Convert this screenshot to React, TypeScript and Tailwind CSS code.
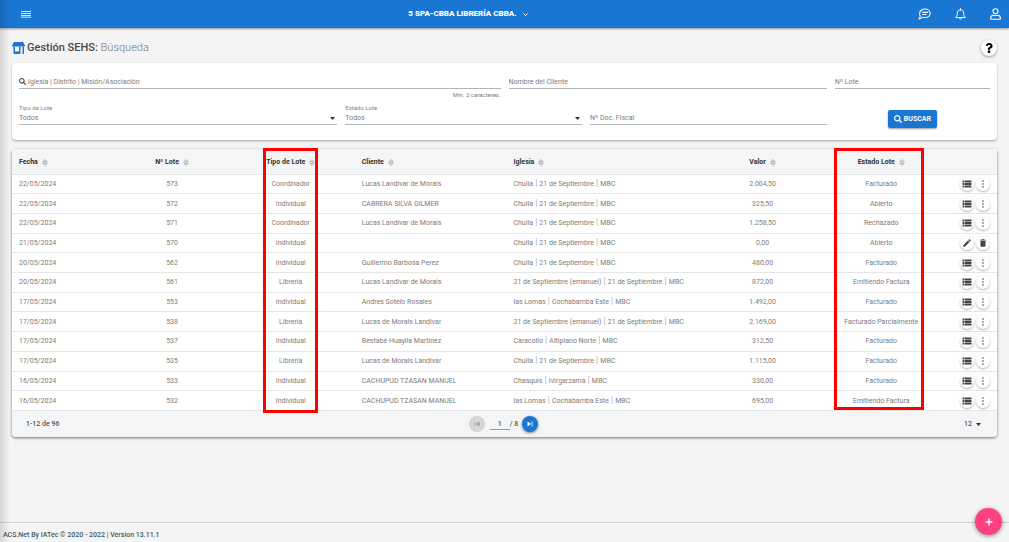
import { Fragment, useState } from 'react';
import { FaPlus, FaQuestion, FaSearch } from 'react-icons/fa';
import { MdDelete, MdEdit, MdSkipNext, MdSkipPrevious, MdViewList } from 'react-icons/md';

type Lote = {
  fecha: string;
  numero: string;
  tipo: string;
  cliente: string;
  iglesia: string[];
  valor: string;
  estado: string;
  editable?: boolean;
};

const CHULLA = ['Chulla', '21 de Septiembre', 'MBC'];
const EMANUEL = ['21 de Septiembre (emanuel)', '21 de Septiembre', 'MBC'];
const LOMAS = ['las Lomas', 'Cochabamba Este', 'MBC'];

const lotes: Lote[] = [
  { fecha: '22/05/2024', numero: '573', tipo: 'Coordinador', cliente: 'Lucas Landivar de Morais', iglesia: CHULLA, valor: '2.004,50', estado: 'Facturado' },
  { fecha: '22/05/2024', numero: '572', tipo: 'Individual', cliente: 'CABRERA SILVA GILMER', iglesia: CHULLA, valor: '325,50', estado: 'Abierto' },
  { fecha: '22/05/2024', numero: '571', tipo: 'Coordinador', cliente: 'Lucas Landivar de Morais', iglesia: CHULLA, valor: '1.258,50', estado: 'Rechazado' },
  { fecha: '21/05/2024', numero: '570', tipo: 'Individual', cliente: '', iglesia: CHULLA, valor: '0,00', estado: 'Abierto', editable: true },
  { fecha: '20/05/2024', numero: '562', tipo: 'Individual', cliente: 'Guillermo Barbosa Perez', iglesia: CHULLA, valor: '480,00', estado: 'Facturado' },
  { fecha: '20/05/2024', numero: '561', tipo: 'Librería', cliente: 'Lucas Landivar de Morais', iglesia: EMANUEL, valor: '872,00', estado: 'Emitiendo Factura' },
  { fecha: '17/05/2024', numero: '553', tipo: 'Individual', cliente: 'Andres Sotelo Rosales', iglesia: LOMAS, valor: '1.492,00', estado: 'Facturado' },
  { fecha: '17/05/2024', numero: '538', tipo: 'Librería', cliente: 'Lucas de Morais Landivar', iglesia: EMANUEL, valor: '2.169,00', estado: 'Facturado Parcialmente' },
  { fecha: '17/05/2024', numero: '537', tipo: 'Individual', cliente: 'Bestabé Huaylla Martinez', iglesia: ['Caracollo', 'Altiplano Norte', 'MBC'], valor: '312,50', estado: 'Facturado' },
  { fecha: '17/05/2024', numero: '535', tipo: 'Librería', cliente: 'Lucas de Morais Landivar', iglesia: CHULLA, valor: '1.115,00', estado: 'Facturado' },
  { fecha: '16/05/2024', numero: '533', tipo: 'Individual', cliente: 'CACHUPUD TZASAN MANUEL', iglesia: ['Chasquis', 'Ivirgarzama', 'MBC'], valor: '330,00', estado: 'Facturado' },
  { fecha: '16/05/2024', numero: '532', tipo: 'Individual', cliente: 'CACHUPUD TZASAN MANUEL', iglesia: LOMAS, valor: '695,00', estado: 'Emitiendo Factura' },
];

const columns = [
  { label: 'Fecha', className: 'w-[10.7%] pl-[7px] text-left' },
  { label: 'Nº Lote', className: 'w-[11.1%] text-center' },
  { label: 'Tipo de Lote', className: 'w-[13%] text-center' },
  { label: 'Cliente', className: 'w-[15.4%] pl-[7px] text-left' },
  { label: 'Iglesia', className: 'w-[20%] pl-[7px] text-left' },
  { label: 'Valor', className: 'w-[12%] text-center' },
  { label: 'Estado Lote', className: 'w-[12.1%] text-center' },
];

function MenuIcon() {
  return (
    <svg viewBox="0 0 10 8" className="h-2 w-[10px]" stroke="currentColor" strokeWidth="1">
      <path d="M0 1.5h10M0 3.5h10M0 5.5h10M0 7.2h10" opacity="0.85" />
    </svg>
  );
}

function ChatIcon() {
  return (
    <svg viewBox="0 0 24 22" className="h-3 w-[13px]" fill="none" stroke="currentColor" strokeWidth="1.9" strokeLinecap="round" strokeLinejoin="round">
      <path d="M13 1.8c5.3 0 9.5 3.500 9.500 8s-4.200 8-9.500 8c-1.500 0-3-.3-4.200-.8C7 18.700 4.800 20 1.800 20c1.300-1.700 2.200-3.500 2.400-5C3.400 13.500 3 11.700 3 9.800c0-4.500 4.600-8 10-8z" />
      <path d="M8.500 8h9.500M8.500 12h6" />
    </svg>
  );
}

function BellIcon() {
  return (
    <svg viewBox="0 0 22 24" className="h-3 w-[11px]" fill="none" stroke="currentColor" strokeWidth="2" strokeLinecap="round" strokeLinejoin="round">
      <path d="M11 3.500c-4 0-6.300 3-6.300 6.500 0 5-1.700 6.500-3 8v1h18.600v-1c-1.300-1.500-3-3-3-8C17.300 6.500 15 3.500 11 3.500zM11 1.200v2" />
      <path d="M8.500 19.500c0 1.800 1 3 2.500 3s2.500-1.200 2.500-3" />
    </svg>
  );
}

function UserIcon() {
  return (
    <svg viewBox="0 0 22 24" className="h-3 w-[11px]" fill="none" stroke="currentColor" strokeWidth="2.2" strokeLinejoin="round">
      <circle cx="11" cy="6.500" r="5" />
      <path d="M7 14.500c1.400.6 2.500.8 4 .8s2.600-.2 4-.8c3.300.3 5.800 2.400 5.800 5.500v1c0 .9-.7 1.600-1.600 1.600H2.800c-.9 0-1.600-.7-1.600-1.600v-1c0-3.100 2.500-5.200 5.800-5.500z" />
    </svg>
  );
}

function StoreIcon() {
  return (
    <svg viewBox="0 0 26 24" className="h-3 w-[13px] text-[#1976d2]" fill="currentColor">
      <path d="M4 0h18l4 7c.3 1.300-.7 2-2 2H2C.7 9-.3 8.300 0 7z" />
      <path d="M3 9h3v10h8V9h3v13c0 1.200-.8 2-2 2H5c-1.200 0-2-.8-2-2zM21 9h3v15h-3z" />
    </svg>
  );
}

function SortIcon() {
  return (
    <svg viewBox="0 0 12 14" className="h-[7px] w-[6px]" fill="none" stroke="#9a9da0" strokeWidth="1.500" strokeLinejoin="round">
      <path d="M6 1.200L10.500 5.500h-9zM6 12.800L1.500 8.500h9z" />
    </svg>
  );
}

function DotsIcon() {
  return (
    <svg viewBox="0 0 2 8" className="h-2 w-0.5" fill="currentColor">
      <circle cx="1" cy="1" r="0.8" />
      <circle cx="1" cy="4" r="0.8" />
      <circle cx="1" cy="7" r="0.8" />
    </svg>
  );
}

function Caret() {
  return (
    <svg viewBox="0 0 10 6" className="h-[3px] w-[5px] text-[#333]" fill="currentColor">
      <path d="M0 0h10L5 6z" />
    </svg>
  );
}

function TextField({ id, label, icon, className }: { id: string; label: string; icon?: React.ReactNode; className?: string }) {
  return (
    <div className={className}>
      <label htmlFor={id} className="flex h-[14px] items-center gap-0.5 border-b border-[#b4b4b4] text-[#444]">
        {icon}
        <input id={id} aria-label={label} placeholder={label} className="min-w-0 flex-1 outline-none placeholder:text-[#7c7c7c]" />
      </label>
    </div>
  );
}

function SelectField({ id, label, className }: { id: string; label: string; className: string }) {
  return (
    <div className={className}>
      <label htmlFor={id} className="block text-[6px] leading-2 text-[#858585]">{label}</label>
      <div className="flex h-[13px] items-center border-b border-[#b4b4b4] pr-0.5">
        <select id={id} className="min-w-0 flex-1 appearance-none text-[#7c7c7c] outline-none">
          <option>Todos</option>
        </select>
        <Caret />
      </div>
    </div>
  );
}

function RoundButton({ label, children }: { label: string; children: React.ReactNode }) {
  return (
    <button type="button" aria-label={label} className="flex size-[14px] items-center justify-center rounded-full bg-white text-[#444] shadow-[0_1px_2px_rgba(0,0,0,0.3)]">
      {children}
    </button>
  );
}

export default function App() {
  const [page, setPage] = useState('1');

  return (
    <div className="relative flex min-h-screen flex-col bg-[#f4f4f4] font-[Roboto,sans-serif] text-[7px] leading-[10px] text-[#7c7c7c]">
      <header className="flex h-7 items-center bg-[#1976d2] pr-2 pl-[21px] text-white shadow-[0_1px_2px_rgba(0,0,0,0.4)]">
        <div className="flex flex-9">
          <button type="button" aria-label="Menú"><MenuIcon /></button>
        </div>
        <button type="button" className="flex items-center gap-[6px] text-[8px] font-black">
          5 SPA-CBBA LIBRERÍA CBBA.
          <svg viewBox="0 0 10 6" className="h-[3px] w-[5px]" fill="none" stroke="currentColor" strokeWidth="2">
            <path d="M1 1l4 4 4-4" />
          </svg>
        </button>
        <div className="flex flex-11 items-center justify-end gap-6">
          <button type="button" aria-label="Mensajes"><ChatIcon /></button>
          <button type="button" aria-label="Notificaciones"><BellIcon /></button>
          <button type="button" aria-label="Usuario"><UserIcon /></button>
        </div>
      </header>

      <main className="flex-1 px-3 pt-3 pb-4">
        <div className="mb-[7px] flex h-4 items-center justify-between">
          <h1 className="flex items-center gap-0.5 text-[11px] leading-4 font-medium text-[#4a4a4a]">
            <StoreIcon />
            <span>Gestión SEHS: <span className="font-light text-[#777]">Búsqueda</span></span>
          </h1>
          <button type="button" aria-label="Ayuda" className="flex size-4 items-center justify-center rounded-full bg-white text-black shadow-[0_1px_3px_rgba(0,0,0,0.4)]">
            <FaQuestion size={10} />
          </button>
        </div>

        <form onSubmit={(e) => e.preventDefault()} className="grid grid-cols-12 gap-x-2 rounded-sm bg-white px-[7px] pt-3 pb-[15px] shadow-[0_1px_2px_rgba(0,0,0,0.35)]">
          <div className="col-span-6">
            <TextField id="iglesia" label="Iglesia | Distrito | Misión/Asociación" icon={<FaSearch size={7} />} />
            <p className="mt-0.5 mb-[5px] text-right text-[6px] leading-2">Mín. 2 caracteres.</p>
          </div>
          <TextField id="cliente" label="Nombre del Cliente" className="col-span-4" />
          <TextField id="numero" label="Nº Lote" className="col-span-2" />
          <SelectField id="tipo" label="Tipo de Lote" className="col-span-4" />
          <SelectField id="estado" label="Estado Lote" className="col-span-3" />
          <TextField id="fiscal" label="Nº Doc. Fiscal" className="col-span-3 self-end" />
          <div className="col-span-2 flex items-end justify-center">
            <button type="submit" className="-mb-[3px] flex h-[18px] items-center gap-0.5 rounded-xs bg-[#1976d2] px-[6px] font-bold text-white shadow-[0_1px_2px_rgba(0,0,0,0.4)]">
              <FaSearch size={8} /> BUSCAR
            </button>
          </div>
        </form>

        <section className="relative mt-[9px] rounded-sm bg-white shadow-[0_1px_3px_rgba(0,0,0,0.55)]">
          <table className="h-[262px] w-full table-fixed border-collapse">
            <thead>
              <tr className="h-[25px] bg-[#f4f5f7] text-[#333]">
                {columns.map((column) => (
                  <th key={column.label} className={`${column.className} pt-0.5 font-bold whitespace-nowrap`}>
                    <span className="inline-flex items-center gap-1 align-middle">
                      {column.label}
                      <SortIcon />
                    </span>
                  </th>
                ))}
                <th className="w-[5.7%]" aria-label="Acciones" />
              </tr>
            </thead>
            <tbody>
              {lotes.map((lote) => (
                <tr key={lote.numero} className="border-y border-[#e6e6e6]">
                  <td className="pl-[7px]">{lote.fecha}</td>
                  <td className="text-center">{lote.numero}</td>
                  <td className="text-center">{lote.tipo}</td>
                  <td className="pl-[7px]">{lote.cliente}</td>
                  <td className="pl-[7px] whitespace-nowrap">
                    {lote.iglesia.map((part, i) => (
                      <Fragment key={part}>
                        {i > 0 && <span className="text-[9px] leading-none font-light text-[#8c8c8c]"> | </span>}
                        {part}
                      </Fragment>
                    ))}
                  </td>
                  <td className="text-center">{lote.valor}</td>
                  <td className="text-center whitespace-nowrap">{lote.estado}</td>
                  <td className="pr-[7px]">
                    <div className="flex justify-end gap-0.5">
                      {lote.editable ? (
                        <>
                          <RoundButton label="Editar"><MdEdit size={10} /></RoundButton>
                          <RoundButton label="Eliminar"><MdDelete size={10} /></RoundButton>
                        </>
                      ) : (
                        <>
                          <RoundButton label="Detalles"><MdViewList size={12} /></RoundButton>
                          <RoundButton label="Más opciones"><DotsIcon /></RoundButton>
                        </>
                      )}
                    </div>
                  </td>
                </tr>
              ))}
            </tbody>
          </table>

          <div className="flex h-[26px] items-center justify-between rounded-b-sm bg-[#f4f5f7] pr-4 pl-[14px] font-medium text-[#555]">
            <span className="flex-1">1-12 de 96</span>
            <div className="flex items-center">
              <button type="button" aria-label="Página anterior" disabled className="flex size-4 items-center justify-center rounded-full bg-[#d6d6d6] text-[#a0a0a0]">
                <MdSkipPrevious size={10} />
              </button>
              <input aria-label="Página" value={page} onChange={(e) => setPage(e.target.value)} className="ml-[5px] h-3 w-5 border-b border-[#999] text-center outline-none" />
              <span className="mr-1">/ 8</span>
              <button type="button" aria-label="Página siguiente" className="flex size-4 items-center justify-center rounded-full bg-[#1976d2] text-white shadow-[0_1px_3px_rgba(0,0,0,0.5)]">
                <MdSkipNext size={10} />
              </button>
            </div>
            <div className="flex flex-1 items-center justify-end gap-1">
              <select aria-label="Filas por página" className="appearance-none outline-none">
                <option>12</option>
              </select>
              <Caret />
            </div>
          </div>

          <div className="pointer-events-none absolute -top-px left-[25.5%] h-[265px] w-[55px] border-3 border-[#ff0000]" />
          <div className="pointer-events-none absolute -top-px left-[83.5%] h-[262px] w-[90px] border-3 border-[#ff0000]" />
        </section>
      </main>

      <footer className="flex h-5 items-center border-t border-[#d4d4d4] px-[3px] pt-1 font-medium text-[#455a64]">
        ACS.Net By IATec © 2020 - 2022 | Version 13.11.1
      </footer>

      <button type="button" aria-label="Agregar" className="fixed right-[7px] bottom-[7px] flex size-[27px] items-center justify-center rounded-full bg-[#ff4081] text-white shadow-[0_1px_4px_rgba(0,0,0,0.45)]">
        <FaPlus size={8} />
      </button>
      <div className="pointer-events-none absolute inset-y-0 left-0 w-[10px] bg-linear-to-r from-black/12 to-transparent" />
    </div>
  );
}
